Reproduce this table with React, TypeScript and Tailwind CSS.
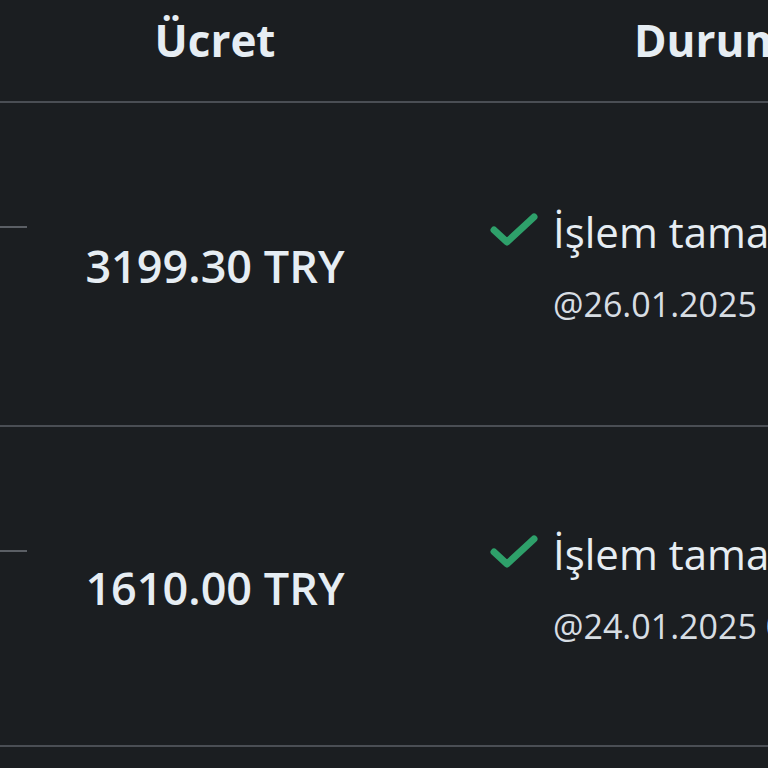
const rows = [
  { price: "3199.30 TRY", date: "@26.01.2025 14:32", h: "h-[324px]" },
  { price: "1610.00 TRY", date: "@24.01.2025 09:18", h: "h-[320px]" },
];

function Check() {
  return (
    <svg viewBox="0 0 48 34" className="h-[34px] w-[48px] shrink-0">
      <path
        d="M4 17 L17 29 L44 4"
        fill="none"
        stroke="#2ea06a"
        strokeWidth="7"
        strokeLinecap="round"
        strokeLinejoin="round"
      />
    </svg>
  );
}

export default function App() {
  return (
    <div
      className="h-[768px] w-[768px] overflow-hidden bg-[#1b1e21] text-[#e6edf3]"
      style={{ fontFamily: '"Segoe UI", "Open Sans", "Noto Sans", sans-serif' }}
    >
      <div className="grid h-[103px] grid-cols-[430px_1fr] border-b-2 border-[#4a4e54] pb-[22px]">
        <div className="flex items-center justify-center text-[44px] font-bold">Ücret</div>
        <div className="flex items-center whitespace-nowrap pl-[204px] text-[44px] font-bold">
          Durum
        </div>
      </div>
      {rows.map((r) => (
        <div
          key={r.price}
          className={`relative grid grid-cols-[430px_1fr] border-b-2 border-[#4a4e54] ${r.h}`}
        >
          <div className="absolute left-0 top-[123px] h-[2px] w-[27px] bg-[#5b5f65]" />
          <div className="flex items-center justify-center pt-[4px] text-[45px] font-semibold">
            {r.price}
          </div>
          <div className="flex items-center overflow-hidden pl-[60px]">
            <div className="flex items-start gap-[15px] whitespace-nowrap">
              <div className="pt-[8px]">
                <Check />
              </div>
              <div className="flex flex-col">
                <span className="text-[42px] leading-[54px]">İşlem tamamlandı</span>
                <span className="mt-[25px] text-[34px] leading-[40px] text-[#d7dde3]">
                  {r.date}
                </span>
              </div>
            </div>
          </div>
        </div>
      ))}
    </div>
  );
}
